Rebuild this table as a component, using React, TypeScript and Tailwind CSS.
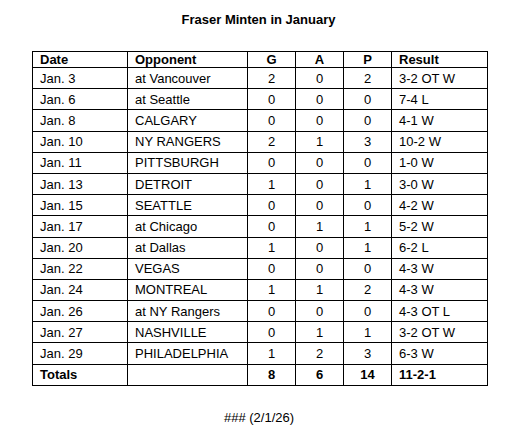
import React from 'react';

interface Game {
  date: string;
  opponent: string;
  g: number;
  a: number;
  p: number;
  result: string;
}

const games: Game[] = [
  { date: 'Jan. 3', opponent: 'at Vancouver', g: 2, a: 0, p: 2, result: '3-2 OT W' },
  { date: 'Jan. 6', opponent: 'at Seattle', g: 0, a: 0, p: 0, result: '7-4 L' },
  { date: 'Jan. 8', opponent: 'CALGARY', g: 0, a: 0, p: 0, result: '4-1 W' },
  { date: 'Jan. 10', opponent: 'NY RANGERS', g: 2, a: 1, p: 3, result: '10-2 W' },
  { date: 'Jan. 11', opponent: 'PITTSBURGH', g: 0, a: 0, p: 0, result: '1-0 W' },
  { date: 'Jan. 13', opponent: 'DETROIT', g: 1, a: 0, p: 1, result: '3-0 W' },
  { date: 'Jan. 15', opponent: 'SEATTLE', g: 0, a: 0, p: 0, result: '4-2 W' },
  { date: 'Jan. 17', opponent: 'at Chicago', g: 0, a: 1, p: 1, result: '5-2 W' },
  { date: 'Jan. 20', opponent: 'at Dallas', g: 1, a: 0, p: 1, result: '6-2 L' },
  { date: 'Jan. 22', opponent: 'VEGAS', g: 0, a: 0, p: 0, result: '4-3 W' },
  { date: 'Jan. 24', opponent: 'MONTREAL', g: 1, a: 1, p: 2, result: '4-3 W' },
  { date: 'Jan. 26', opponent: 'at NY Rangers', g: 0, a: 0, p: 0, result: '4-3 OT L' },
  { date: 'Jan. 27', opponent: 'NASHVILLE', g: 0, a: 1, p: 1, result: '3-2 OT W' },
  { date: 'Jan. 29', opponent: 'PHILADELPHIA', g: 1, a: 2, p: 3, result: '6-3 W' },
];

const cell = 'border border-black p-0 align-middle';
const left = `${cell} pl-[7px] text-left`;
const mid = `${cell} text-center`;

const App: React.FC = () => {
  return (
    <div
      className="w-[515px] h-[438px] bg-white text-black text-[13px] leading-[15px]"
      style={{ fontFamily: '"Liberation Sans", Arial, sans-serif' }}
    >
      {/* Title */}
      <div className="pt-[12px] pl-[2px] text-center font-bold">Fraser Minten in January</div>

      {/* Stats table */}
      <table className="mt-[24px] ml-[32px] w-[455px] h-[335px] table-fixed border-collapse">
        <colgroup>
          <col className="w-[95px]" />
          <col className="w-[120px]" />
          <col className="w-[48px]" />
          <col className="w-[48px]" />
          <col className="w-[48px]" />
          <col className="w-[96px]" />
        </colgroup>
        <thead>
          <tr className="font-bold">
            <td className={left}>Date</td>
            <td className={left}>Opponent</td>
            <td className={mid}>G</td>
            <td className={mid}>A</td>
            <td className={mid}>P</td>
            <td className={left}>Result</td>
          </tr>
        </thead>
        <tbody>
          {games.map((game) => (
            <tr key={game.date}>
              <td className={left}>{game.date}</td>
              <td className={left}>{game.opponent}</td>
              <td className={mid}>{game.g}</td>
              <td className={mid}>{game.a}</td>
              <td className={mid}>{game.p}</td>
              <td className={left}>{game.result}</td>
            </tr>
          ))}
          <tr className="font-bold">
            <td className={left}>Totals</td>
            <td className={left}></td>
            <td className={mid}>8</td>
            <td className={mid}>6</td>
            <td className={mid}>14</td>
            <td className={left}>11-2-1</td>
          </tr>
        </tbody>
      </table>

      {/* Footer */}
      <div className="mt-[24px] pl-[3px] text-center">### (2/1/26)</div>
    </div>
  );
};

export default App;
